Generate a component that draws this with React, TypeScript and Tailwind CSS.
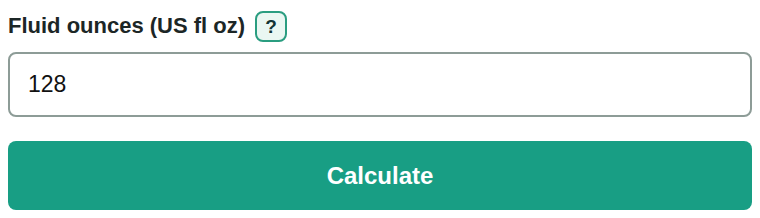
export default function App() {
  return (
    <div className="min-h-screen bg-white px-2 pt-[10px] font-['Liberation_Sans',Arial,sans-serif]">
      {/* Label row */}
      <div className="flex items-center gap-[10px] h-8">
        <label className="text-[22px] font-bold text-[#1c2626] leading-none">Fluid ounces (US fl oz)</label>
        <button className="w-8 h-[31px] rounded-lg border-2 border-[#2a9d80] bg-[#eaf7f2] text-[#123333] text-[19px] font-bold leading-none flex items-center justify-center">
          ?
        </button>
      </div>

      {/* Input */}
      <input
        type="text"
        defaultValue="128"
        className="mt-[10px] w-full h-[65px] rounded-lg border-2 border-[#8d9c97] bg-white px-[18px] text-[23px] text-[#111] outline-none"
      />

      {/* Button */}
      <button className="mt-6 w-full h-[69px] rounded-lg bg-[#189e84] text-white text-[24px] font-bold">
        Calculate
      </button>
    </div>
  );
}
